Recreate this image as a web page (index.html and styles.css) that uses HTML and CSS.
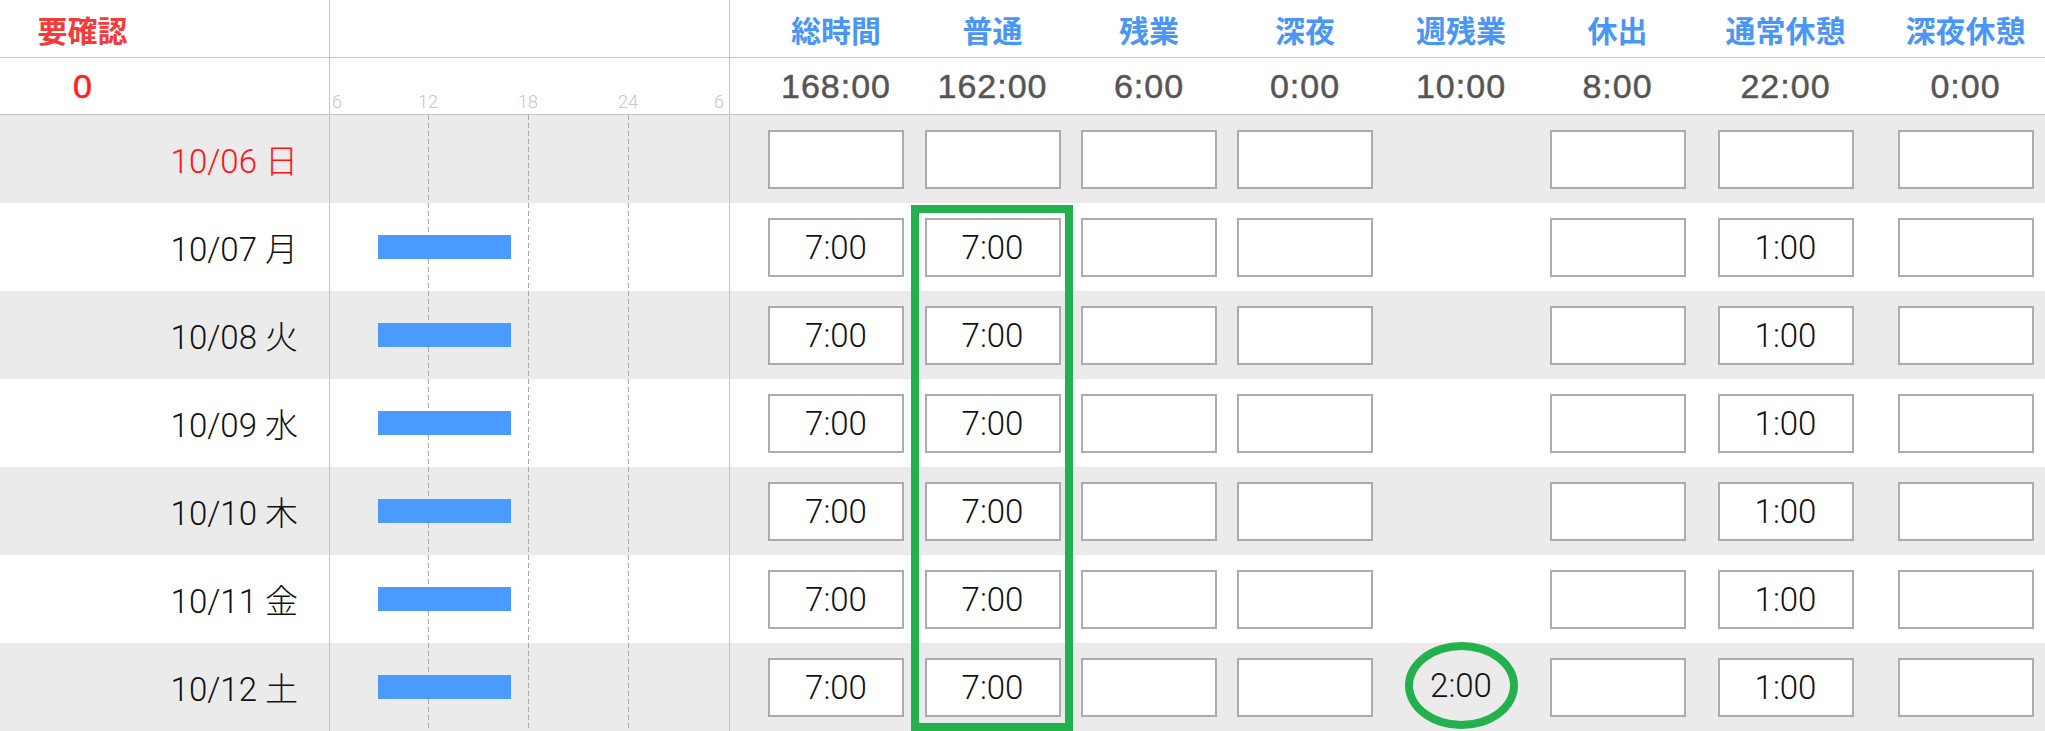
FILE: index.html
```html
<!DOCTYPE html>
<html lang="ja">
<head>
    <meta charset="UTF-8">
    <meta name="viewport" content="width=device-width, initial-scale=1.0">
    <title>勤務集計</title>
    <link rel="stylesheet" href="styles.css">
</head>
<body>
    <div class="sheet">
        <div class="row head">
            <div class="label"><span class="badge-title">要確認</span></div>
            <div class="chart"></div>
            <div class="fields">
                <span class="field">総時間</span>
                <span class="field">普通</span>
                <span class="field">残業</span>
                <span class="field">深夜</span>
                <span class="field">週残業</span>
                <span class="field">休出</span>
                <span class="field">通常休憩</span>
                <span class="field">深夜休憩</span>
            </div>
        </div>

        <div class="row totals">
            <div class="label"><span class="badge-count">0</span></div>
            <div class="chart scale">
                <span class="tick first">6</span>
                <span class="tick">12</span>
                <span class="tick">18</span>
                <span class="tick">24</span>
                <span class="tick last">6</span>
            </div>
            <div class="fields">
                <span class="field">168:00</span>
                <span class="field">162:00</span>
                <span class="field">6:00</span>
                <span class="field">0:00</span>
                <span class="field">10:00</span>
                <span class="field">8:00</span>
                <span class="field">22:00</span>
                <span class="field">0:00</span>
            </div>
        </div>

        <div class="row day shade">
            <div class="label date holiday">10/06 日</div>
            <div class="chart lines"></div>
            <div class="fields">
                <div class="field"><span class="box"></span></div>
                <div class="field"><span class="box"></span></div>
                <div class="field"><span class="box"></span></div>
                <div class="field"><span class="box"></span></div>
                <div class="field"></div>
                <div class="field"><span class="box"></span></div>
                <div class="field"><span class="box"></span></div>
                <div class="field"><span class="box"></span></div>
            </div>
        </div>

        <div class="row day">
            <div class="label date">10/07 月</div>
            <div class="chart lines"><span class="bar"></span></div>
            <div class="fields">
                <div class="field"><span class="box">7:00</span></div>
                <div class="field"><span class="box">7:00</span></div>
                <div class="field"><span class="box"></span></div>
                <div class="field"><span class="box"></span></div>
                <div class="field"></div>
                <div class="field"><span class="box"></span></div>
                <div class="field"><span class="box">1:00</span></div>
                <div class="field"><span class="box"></span></div>
            </div>
        </div>

        <div class="row day shade">
            <div class="label date">10/08 火</div>
            <div class="chart lines"><span class="bar"></span></div>
            <div class="fields">
                <div class="field"><span class="box">7:00</span></div>
                <div class="field"><span class="box">7:00</span></div>
                <div class="field"><span class="box"></span></div>
                <div class="field"><span class="box"></span></div>
                <div class="field"></div>
                <div class="field"><span class="box"></span></div>
                <div class="field"><span class="box">1:00</span></div>
                <div class="field"><span class="box"></span></div>
            </div>
        </div>

        <div class="row day">
            <div class="label date">10/09 水</div>
            <div class="chart lines"><span class="bar"></span></div>
            <div class="fields">
                <div class="field"><span class="box">7:00</span></div>
                <div class="field"><span class="box">7:00</span></div>
                <div class="field"><span class="box"></span></div>
                <div class="field"><span class="box"></span></div>
                <div class="field"></div>
                <div class="field"><span class="box"></span></div>
                <div class="field"><span class="box">1:00</span></div>
                <div class="field"><span class="box"></span></div>
            </div>
        </div>

        <div class="row day shade">
            <div class="label date">10/10 木</div>
            <div class="chart lines"><span class="bar"></span></div>
            <div class="fields">
                <div class="field"><span class="box">7:00</span></div>
                <div class="field"><span class="box">7:00</span></div>
                <div class="field"><span class="box"></span></div>
                <div class="field"><span class="box"></span></div>
                <div class="field"></div>
                <div class="field"><span class="box"></span></div>
                <div class="field"><span class="box">1:00</span></div>
                <div class="field"><span class="box"></span></div>
            </div>
        </div>

        <div class="row day">
            <div class="label date">10/11 金</div>
            <div class="chart lines"><span class="bar"></span></div>
            <div class="fields">
                <div class="field"><span class="box">7:00</span></div>
                <div class="field"><span class="box">7:00</span></div>
                <div class="field"><span class="box"></span></div>
                <div class="field"><span class="box"></span></div>
                <div class="field"></div>
                <div class="field"><span class="box"></span></div>
                <div class="field"><span class="box">1:00</span></div>
                <div class="field"><span class="box"></span></div>
            </div>
        </div>

        <div class="row day shade">
            <div class="label date">10/12 土</div>
            <div class="chart lines"><span class="bar"></span></div>
            <div class="fields">
                <div class="field"><span class="box">7:00</span></div>
                <div class="field"><span class="box">7:00</span></div>
                <div class="field"><span class="box"></span></div>
                <div class="field"><span class="box"></span></div>
                <div class="field"><span class="circled">2:00</span></div>
                <div class="field"><span class="box"></span></div>
                <div class="field"><span class="box">1:00</span></div>
                <div class="field"><span class="box"></span></div>
            </div>
        </div>

        <!-- annotation drawn over the 普通 column -->
        <div class="mark-column"></div>
    </div>
</body>
</html>
```

FILE: styles.css
```css
html, body {
    margin: 0;
    overflow: hidden;
    background: #fff;
}

body {
    font-family: Roboto, "Noto Sans CJK JP", sans-serif;
    color: #111;
}

.sheet {
    position: relative;
    width: 2045px;
    height: 731px;
    overflow: hidden;
}

.row {
    display: grid;
    grid-template-columns: 329px 401px auto;
    box-sizing: border-box;
}

.head {
    height: 58px;
    border-bottom: 1px solid #c4c4c4;
}

.totals {
    height: 57px;
    border-bottom: 1px solid #c4c4c4;
}

.day {
    height: 88px;
}

.shade {
    background: #ebebeb;
}

.label {
    display: flex;
    align-items: center;
}

.badge-title,
.badge-count {
    width: 165px;
    text-align: center;
}

.badge-title {
    font-family: "Noto Sans CJK JP", sans-serif;
    font-size: 30px;
    font-weight: 700;
    color: #f53a3a;
}

.badge-count {
    font-family: "Liberation Sans", sans-serif;
    font-size: 34px;
    color: #ff2222;
    -webkit-text-stroke: 0.6px #ff2222;
}

.date {
    justify-content: flex-end;
    padding-right: 31px;
    font-size: 33px;
    font-weight: 300;
    color: #111;
}

.holiday {
    color: #ff1414;
}

.chart {
    box-sizing: border-box;
    border-left: 1px solid #c4c4c4;
    border-right: 1px solid #c4c4c4;
    display: flex;
    align-items: center;
}

.lines {
    background-image:
        repeating-linear-gradient(#a8a8a8 0 5px, transparent 5px 8px),
        repeating-linear-gradient(#a8a8a8 0 5px, transparent 5px 8px),
        repeating-linear-gradient(#a8a8a8 0 5px, transparent 5px 8px);
    background-size: 1px 100%;
    background-position: 98px 0, 198px 0, 298px 0;
    background-repeat: no-repeat;
}

.bar {
    display: block;
    width: 133px;
    height: 24px;
    margin-left: 48px;
    background: #4a9bff;
}

.scale {
    align-items: flex-end;
    padding-bottom: 3px;
    font-size: 18px;
    font-weight: 300;
    line-height: 18px;
    color: #c6c6c6;
}

.tick {
    width: 100px;
    text-align: center;
}

.tick.first {
    width: 48px;
    text-align: left;
    padding-left: 2px;
    box-sizing: border-box;
}

.tick.last {
    width: 51px;
    text-align: right;
    padding-right: 5px;
    box-sizing: border-box;
}

.fields {
    display: grid;
    grid-template-columns: 156px 157px 156px 156px 156px 157px 179px 181px;
    padding-left: 28px;
}

.field {
    display: flex;
    align-items: center;
    justify-content: center;
}

.head .field {
    font-family: "Noto Sans CJK JP", sans-serif;
    font-size: 30px;
    font-weight: 700;
    color: #4a96f8;
}

.totals .field {
    font-family: "Liberation Sans", sans-serif;
    font-size: 34px;
    letter-spacing: 1px;
    color: #555;
    -webkit-text-stroke: 0.5px #555;
}

.box {
    display: flex;
    align-items: center;
    justify-content: center;
    width: 136px;
    height: 59px;
    box-sizing: border-box;
    border: 2px solid #acacac;
    background: #fff;
    font-size: 33px;
    font-weight: 300;
}

.circled {
    display: flex;
    align-items: center;
    justify-content: center;
    width: 113px;
    height: 87px;
    box-sizing: border-box;
    border: 8px solid #22b14c;
    border-radius: 50%;
    font-size: 33px;
    font-weight: 300;
    margin-top: -3px;
}

.mark-column {
    position: absolute;
    left: 911px;
    top: 205px;
    width: 162px;
    height: 526px;
    box-sizing: border-box;
    border: 8px solid #22b14c;
}
```
